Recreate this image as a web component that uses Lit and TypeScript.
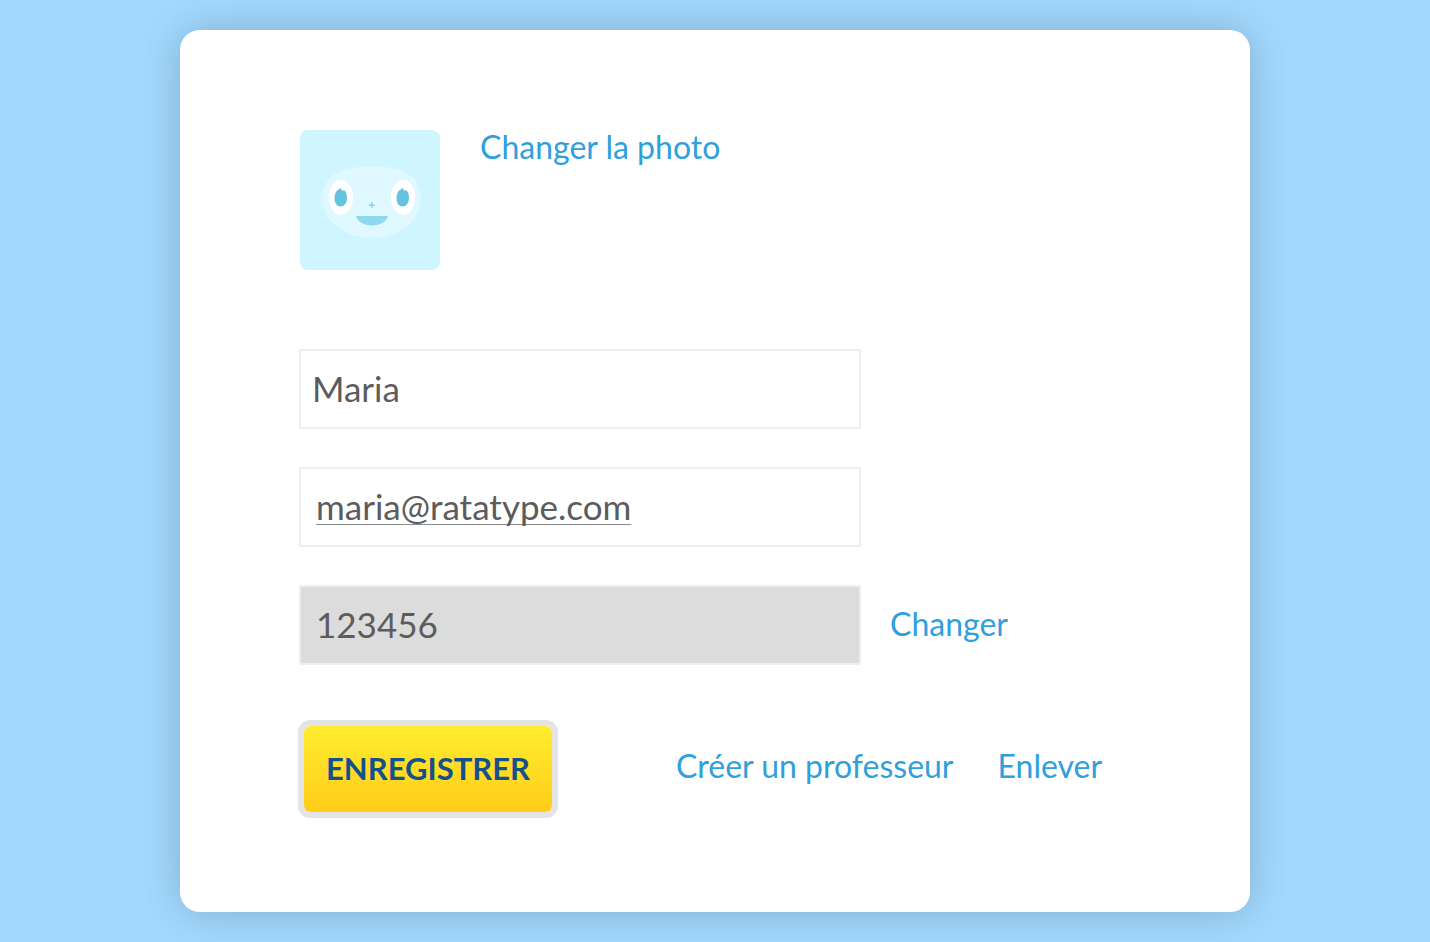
import { LitElement, html, css } from "lit";
import { customElement } from "lit/decorators.js";

@customElement("profile-avatar")
class ProfileAvatar extends LitElement {
  static styles = css`
    :host {
      display: block;
      flex: none;
      width: 140px;
      height: 140px;
      border-radius: 8px;
      overflow: hidden;
      background: #cff5ff;
    }
    .face {
      display: block;
      width: 100%;
      height: 100%;
    }
  `;

  render() {
    return html`
      <svg class="face" viewBox="0 0 140 140" role="img" aria-label="Avatar">
        <path fill="#e0f8ff" d="M72 36.500C88 36.500 103 38 112 47C118 53 121 61 121 69C121 91 98 108 72 108C45 108 22 91 22 69C22 61 25 53 31 47C40 38 56 36.500 72 36.500Z" />
        <ellipse cx="41" cy="67.500" rx="12" ry="17.500" fill="#fff" />
        <ellipse cx="103" cy="67.500" rx="12" ry="17.500" fill="#fff" />
        <path fill="#66c3e0" d="M38 60L40.500 58L42.500 61L44 60C46 61.500 47 64 47 68C47 73 44 76.500 40.500 76.500C37 76.500 34.500 73 34.500 68C34.500 64 36 61 38 60Z" />
        <path fill="#66c3e0" d="M100 60L102.500 58L104.500 61L106 60C108 61.500 109 64 109 68C109 73 106 76.500 102.500 76.500C99 76.500 96.500 73 96.500 68C96.500 64 98 61 100 60Z" />
        <path fill="#8cd9ee" d="M71 72h1.500v2h2v2h-2v2h-1.500v-2h-2v-2h2z" />
        <path fill="#8cd9ee" d="M56 86H88C86 92 80 95.500 72 95.500C64 95.500 58 92 56 86Z" />
      </svg>
    `;
  }
}

@customElement("app-root")
class AppRoot extends LitElement {
  static styles = css`
    :host {
      display: block;
      box-sizing: border-box;
      min-height: 100vh;
      padding: 30px;
      background: #a3d9fe;
      font-family: Lato, "Open Sans", sans-serif;
    }
    .card {
      box-sizing: border-box;
      max-width: 1070px;
      margin: 0 auto;
      padding: 100px 120px 94px 118px;
      border-radius: 20px;
      background: #fff;
      box-shadow: 0 0 40px rgba(80, 110, 140, 0.4);
    }
    .photo {
      display: flex;
      align-items: flex-start;
      gap: 40px;
      padding-left: 2px;
      margin-bottom: 79px;
    }
    .link {
      padding-bottom: 2px;
      color: #2fa0dc;
      font-size: 32px;
      line-height: 34px;
      text-decoration: none;
      white-space: nowrap;
    }
    .fields {
      display: grid;
      gap: 38px;
      padding-left: 1px;
    }
    .row {
      display: flex;
      align-items: center;
      gap: 29px;
    }
    .input {
      box-sizing: border-box;
      width: 562px;
      min-width: 0;
      height: 80px;
      margin: 0;
      padding: 0 15px 2px;
      border: 2px solid #eee;
      border-radius: 0;
      outline: none;
      background: #fff;
      color: #5c5c5c;
      font: 35px/44px Lato, "Open Sans", sans-serif;
    }
    .name {
      padding: 0 11px 2px;
    }
    .email {
      text-decoration: underline 1px #8c8c8c;
      text-decoration-skip-ink: none;
      text-underline-offset: 4px;
    }
    .locked {
      background: #dcdcdc;
    }
    .actions {
      display: flex;
      align-items: center;
      gap: 118px;
      margin-top: 55px;
    }
    .links {
      display: flex;
      gap: 44px;
      padding-bottom: 4px;
    }
    .save {
      flex: none;
      box-sizing: border-box;
      min-width: 260px;
      height: 98px;
      margin: 0;
      padding: 0 16px 2px;
      border: 6px solid #e4e4e4;
      border-radius: 12px;
      background: linear-gradient(#ffec30, #ffcd19) padding-box;
      color: #14518c;
      font: 700 31px/36px Lato, "Open Sans", sans-serif;
      text-transform: uppercase;
    }
  `;

  render() {
    return html`
      <main class="card">
        <div class="photo">
          <profile-avatar></profile-avatar>
          <a class="link" href="#photo">Changer la photo</a>
        </div>
        <form>
          <div class="fields">
            <div class="row">
              <input class="input name" type="text" aria-label="Nom" .value=${"Maria"} />
            </div>
            <div class="row">
              <input class="input email" type="email" aria-label="E-mail" .value=${"maria@ratatype.com"} />
            </div>
            <div class="row">
              <input class="input locked" type="text" aria-label="Mot de passe" readonly .value=${"123456"} />
              <a class="link" href="#password">Changer</a>
            </div>
          </div>
          <div class="actions">
            <button class="save" type="button">Enregistrer</button>
            <div class="links">
              <a class="link" href="#teacher">Créer un professeur</a>
              <a class="link" href="#remove">Enlever</a>
            </div>
          </div>
        </form>
      </main>
    `;
  }
}
